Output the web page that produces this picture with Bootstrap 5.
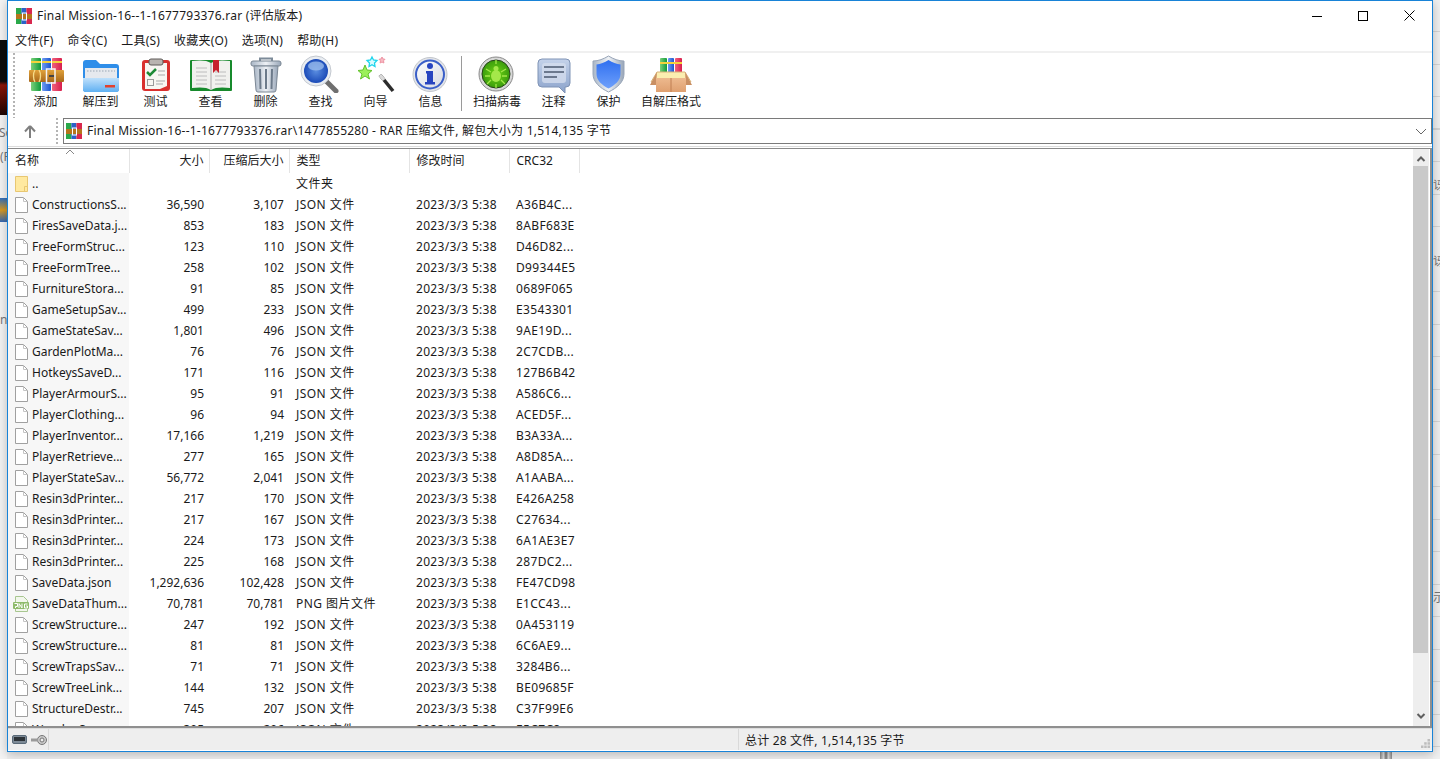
<!DOCTYPE html>
<html lang="zh-CN">
<head>
    <meta charset="UTF-8">
    <meta name="viewport" content="width=device-width, initial-scale=1.0">
    <title>Final Mission-16--1-1677793376.rar</title>
    <link rel="stylesheet" href="https://cdn.jsdelivr.net/npm/bootstrap@5.3.0/dist/css/bootstrap.min.css">
    <style>
        html, body { height: 100%; overflow: hidden; }
        body { background: #efefef; font: 12px/16px "Noto Sans", "Noto Sans CJK SC", sans-serif; color: #1a1a1a; }

        /* bits of other windows showing behind the archive window */
        .bg-left { left: 0; top: 0; width: 7px; height: 759px; background: #f4f4f4; overflow: hidden; }
        .bg-left .scrap-dark { height: 75px; margin-top: 40px; background: linear-gradient(#0b0b0b 55%, #8c1407 60%, #1c0502); }
        .bg-left .scrap-icon { height: 24px; margin-top: 83px; background: linear-gradient(#2f6fc0, #d89a22 50%, #3468b5); }
        .bg-right { left: 1433px; top: 0; width: 7px; height: 759px; overflow: hidden; background: repeating-linear-gradient(#f1f1f1 0 31px, #d6d6d6 31px 32.5px); }
        .scrap-text { color: #777; white-space: nowrap; }
        .scrap-bottom { left: 1380px; top: 752px; width: 12px; height: 7px; background: linear-gradient(90deg, #888, #ddd 30%, #777 50%, #ddd 70%, #888); }

        .rar-window { left: 7px; top: 0; width: 1426px; height: 752px; background: #fff; border: 1px solid #1883d7; box-shadow: 0 2px 10px rgba(0,0,0,.25); }
        .title-bar { height: 29px; }
        .title-bar .title-text { margin-left: 5px; letter-spacing: .24px; }
        .win-btn { width: 46px; height: 29px; }
        .menu-bar { height: 21px; }
        .menu-item { padding: 0 7px; letter-spacing: .2px; }
        .tool-bar { height: 67px; border-top: 2px solid #f0f0f0; padding-left: 5px; }
        .grip-v { width: 2px; background: repeating-linear-gradient(#b4b4b4 0 2px, transparent 2px 4px); }
        .tool-grip { margin-right: 3px; }
        .tool-btn { width: 55px; padding-top: 2px; }
        .tool-btn svg { display: block; }
        .tool-btn .lbl { display: block; line-height: 18px; white-space: nowrap; }
        .tool-sep { width: 1px; height: 55px; margin: 3px 6px 0 3px; background: #9a9a9a; }
        .addr-row { height: 27px; }
        .up-arrow { width: 48px; }
        .addr-box { height: 26px; border: 1px solid #7a7a7a; padding-left: 2px; margin-left: 5px; }
        .addr-box .addr-text { margin-left: 5px; letter-spacing: .25px; }
        .band-line { height: 2px; border-bottom: 1px solid #dcdcdc; }
        .list-box { height: 580px; border-top: 1px solid #8a8a8a; border-bottom: 2px solid #8f8f8f; border-right: 2px solid #8f8f8f; margin-top: 1px; }
        .file-scroll { overflow: hidden; }
        table.file-table { table-layout: fixed; width: 571px; border-collapse: collapse; }
        .file-table th { font-weight: 400; height: 24px; padding: 0 5px 0 7px; vertical-align: middle; border-right: 1px solid #e4e4e4; border-bottom: 0; }
        .file-table td { height: 21px; padding: 0 5px 0 7px; white-space: nowrap; overflow: hidden; }
        .file-table td.name-cell { background: #f7f7f7; padding: 0 0 0 7px; }
        .file-table td.type-cell { letter-spacing: .45px; }
        .file-table td.time-cell { letter-spacing: .3px; }
        .file-table td.crc-cell { letter-spacing: .35px; }
        .name-wrap { display: flex; align-items: center; gap: 4px; }
        .png-ico { margin: 0 -1px 0 -2px; }
        .sort-mark { left: 57px; top: 0; }
        .v-scroll { width: 16px; background: #eeeeee; margin-right: 1px; }
        .v-scroll .thumb { left: 0; right: 1px; top: 17px; height: 487px; background: #c9c9c9; }
        .status-bar { height: 22px; background: #eeeeee; border-top: 1px solid #dcdcdc; }
        .status-left { width: 41px; height: 100%; border-right: 1px solid #d9d9d9; }
        .status-text { margin-left: 689px; height: 100%; border-left: 1px solid #d9d9d9; padding: 2px 0 0 6px; letter-spacing: .17px; }
        .size-grip { right: 2px; bottom: 2px; }
    </style>
</head>
<body>
    <!-- other windows behind -->
    <div class="bg-left position-absolute">
        <div class="scrap-dark"></div><div class="scrap-icon"></div>
        <span class="scrap-text position-absolute" style="left:-1px;top:125px">So</span>
        <span class="scrap-text position-absolute" style="left:0;top:149px">(F</span>
        <span class="scrap-text position-absolute" style="left:0;top:312px">n</span>
    </div>
    <div class="bg-right position-absolute">
        <span class="scrap-text position-absolute" style="left:0;top:178px">讶</span>
        <span class="scrap-text position-absolute" style="left:0;top:254px">讶</span>
        <span class="scrap-text position-absolute" style="left:0;top:590px">示</span>
    </div>
    <div class="scrap-bottom position-absolute"></div>

    <div class="rar-window position-absolute d-flex flex-column">
        <!-- Title bar -->
        <div class="title-bar d-flex align-items-center">
            <svg class="ms-2" width="16" height="16" viewBox="0 0 16 16"><rect x="0" y="0" width="5.4" height="16" fill="#2aa84a"/><rect x="5.4" y="0" width="5" height="16" fill="#2a62c8"/><rect x="10.4" y="0" width="5.6" height="16" fill="#d8284e"/><rect x="0" y="6" width="16" height="5" fill="#b5751c"/><rect x="6.5" y="5" width="4" height="7" fill="none" stroke="#fff"/></svg>
            <span class="title-text">Final Mission-16--1-1677793376.rar (评估版本)</span>
            <div class="ms-auto d-flex">
                <div class="win-btn d-flex align-items-center justify-content-center"><svg width="10" height="10"><rect x="0" y="5" width="10" height="1" fill="#000"/></svg></div>
                <div class="win-btn d-flex align-items-center justify-content-center"><svg width="10" height="10"><rect x=".5" y=".5" width="9" height="9" fill="none" stroke="#000"/></svg></div>
                <div class="win-btn d-flex align-items-center justify-content-center"><svg width="11" height="11"><path d="M.5.5l10 10M10.500.5l-10 10" stroke="#000" fill="none"/></svg></div>
            </div>
        </div>

        <!-- Menu -->
        <div class="menu-bar d-flex align-items-center">
            <span class="menu-item">文件(F)</span><span class="menu-item">命令(C)</span><span class="menu-item">工具(S)</span><span class="menu-item">收藏夹(O)</span><span class="menu-item">选项(N)</span><span class="menu-item">帮助(H)</span>
        </div>

        <!-- Toolbar -->
        <div class="tool-bar d-flex">
            <div class="grip-v tool-grip h-100"></div>
            <div id="toolButtons" class="d-flex"></div>
        </div>

        <!-- Address row -->
        <div class="addr-row d-flex align-items-stretch">
            <div class="up-arrow d-flex align-items-center justify-content-center pe-1">
                <svg width="12" height="13" viewBox="0 0 12 13"><path d="M6 1L1 6.500M6 1l5 5.500M6 1v12" stroke="#7f7f7f" stroke-width="2" fill="none"/></svg>
            </div>
            <div class="grip-v"></div>
            <div class="addr-box flex-grow-1 d-flex align-items-center">
                <svg width="16" height="16" viewBox="0 0 16 16"><rect x="0" y="0" width="5.4" height="16" fill="#2aa84a"/><rect x="5.4" y="0" width="5" height="16" fill="#2a62c8"/><rect x="10.4" y="0" width="5.6" height="16" fill="#d8284e"/><rect x="0" y="6" width="16" height="5" fill="#b5751c"/><rect x="6.5" y="5" width="4" height="7" fill="none" stroke="#fff"/></svg>
                <span class="addr-text">Final Mission-16--1-1677793376.rar\1477855280 - RAR 压缩文件, 解包大小为 1,514,135 字节</span>
                <svg class="ms-auto me-1" width="12" height="7" viewBox="0 0 12 7"><path d="M1 1l5 5 5-5" stroke="#666" fill="none"/></svg>
            </div>
        </div>
        <div class="band-line"></div>

        <!-- File list -->
        <div class="list-box d-flex">
            <div class="file-scroll flex-grow-1 position-relative">
                <svg class="sort-mark position-absolute" width="10" height="6" viewBox="0 0 10 6"><path d="M1 5l4-4 4 4" stroke="#888" fill="none"/></svg>
                <table class="file-table">
                    <colgroup><col style="width:121px"><col style="width:80px"><col style="width:80px"><col style="width:120px"><col style="width:100px"><col style="width:70px"></colgroup>
                    <thead><tr>
                        <th>名称</th><th class="text-end">大小</th><th class="text-end">压缩后大小</th><th>类型</th><th>修改时间</th><th>CRC32</th>
                    </tr></thead>
                    <tbody id="fileRows"></tbody>
                </table>
            </div>
            <div class="v-scroll position-relative d-flex flex-column justify-content-between align-items-center">
                <svg class="mt-1" width="10" height="12" viewBox="0 0 10 12"><path d="M1.500 8L5 4.500 8.500 8" stroke="#5f5f5f" stroke-width="2" fill="none"/></svg>
                <div class="thumb position-absolute"></div>
                <svg class="mb-1" width="10" height="12" viewBox="0 0 10 12"><path d="M1.500 4L5 7.500 8.500 4" stroke="#5f5f5f" stroke-width="2" fill="none"/></svg>
            </div>
        </div>

        <!-- Status bar -->
        <div class="status-bar d-flex align-items-center position-relative">
            <div class="status-left d-flex align-items-center ps-1 gap-1">
                <svg width="15" height="9" viewBox="0 0 15 9"><rect x=".5" y=".5" width="14" height="8" rx="1.500" fill="#7d8a96" stroke="#5a6a78"/><rect x="2" y="2" width="11" height="4" fill="#2d3338"/></svg>
                <svg width="16" height="10" viewBox="0 0 16 10"><circle cx="11" cy="5" r="4.500" fill="#c9c9c9" stroke="#777"/><circle cx="11" cy="5" r="2" fill="#eee" stroke="#777"/><rect x="0" y="3.500" width="7" height="3" fill="#9a9a9a"/></svg>
            </div>
            <div class="status-text d-flex align-items-center">总计 28 文件, 1,514,135 字节</div>
            <svg class="size-grip position-absolute" width="9" height="9" viewBox="0 0 9 9" fill="#bdbdbd"><rect x="6.500" y="0" width="2.500" height="2.500"/><rect x="3.200" y="3.200" width="2.500" height="2.500"/><rect x="6.500" y="3.200" width="2.500" height="2.500"/><rect x="0" y="6.500" width="2.500" height="2.500"/><rect x="3.200" y="6.500" width="2.500" height="2.500"/><rect x="6.500" y="6.500" width="2.500" height="2.500"/></svg>
        </div>
    </div>

    <script src="https://cdn.jsdelivr.net/npm/bootstrap@5.3.0/dist/js/bootstrap.bundle.min.js"></script>
    <script>
        // Toolbar icons, drawn on a 44x38 box
        const books = (x, y, w, h) => `
            <rect x="${x}" y="${y}" width="${w}" height="${h}" rx="1" fill="url(#gGreen)"/>
            <rect x="${x + w + 1}" y="${y}" width="${w - 1}" height="${h}" rx="1" fill="url(#gBlue)"/>
            <rect x="${x + 2 * w + 1}" y="${y}" width="${w}" height="${h}" rx="1" fill="url(#gRed)"/>`;

        const icons = {
            add: books(7, 3, 10, 33) + `
                <rect x="7" y="6" width="10" height="2" fill="#f4d23c"/><rect x="18" y="6" width="9" height="2" fill="#f4d23c"/><rect x="28" y="6" width="10" height="2" fill="#f4d23c"/>
                <rect x="5" y="15" width="35" height="12" rx="1" fill="url(#gBelt)"/>
                <path d="M11 15c-2 3-2 9 0 12M15 15c2 3 2 9 0 12" fill="none" stroke="#f6dc8a" stroke-width="1.300"/>
                <rect x="22.500" y="14" width="8.500" height="14" fill="none" stroke="#f4f4f4" stroke-width="1.500"/>
                <rect x="25" y="20" width="5" height="2" fill="#444"/>`,
            extract: `
                <path d="M4 8a3 3 0 0 1 3-3h10l4 4h16a3 3 0 0 1 3 3v22a3 3 0 0 1-3 3H7a3 3 0 0 1-3-3z" fill="#2f8ee9"/>
                <rect x="6" y="13" width="32" height="10" fill="#e6e9ee"/>
                <path d="M8 16h28" stroke="#9aa7b5" stroke-dasharray="1.500 1.500"/>
                <path d="M4 23h36v11a3 3 0 0 1-3 3H7a3 3 0 0 1-3-3z" fill="url(#gFolder)"/>
                <rect x="26" y="30" width="10" height="2.500" fill="#e2412e"/>`,
            test: `
                <rect x="8" y="5" width="28" height="31" rx="3" fill="#d9302e"/>
                <path d="M11 8h22v23l-7 3H11z" fill="#f8f6f2"/>
                <rect x="15" y="4" width="14" height="6" rx="2" fill="#b9b4b0" stroke="#5f5a58"/>
                <path d="M13 17l3 3 6-6" stroke="#1f8a36" stroke-width="2.500" fill="none"/>
                <path d="M24 16h7M24 20h7M22 26h9M22 29h7" stroke="#a9a9a9"/>
                <rect x="13.500" y="24.500" width="6" height="6" fill="none" stroke="#9a9a9a"/>`,
            view: `
                <rect x="1" y="5" width="42" height="31" rx="1" fill="#178a2c"/>
                <path d="M3 6c7-1 15-1 19 2 4-3 12-3 19-2v27c-7-1-15-1-19 2-4-3-12-3-19-2z" fill="#f1f1ee"/>
                <path d="M22 8v27" stroke="#a8a8a8"/>
                <path d="M7 13h11M7 17h11M7 21h11M7 25h11M7 29h11M26 17h11M26 21h11M26 25h11M26 29h11" stroke="#bcbcbc"/>
                <path d="M24 5h6v13l-3-3-3 3z" fill="#c7232f"/>`,
            del: `
                <path d="M16 6V3.500h12V6" fill="none" stroke="#7d8b99" stroke-width="2"/>
                <rect x="7" y="6" width="30" height="5" rx="2" fill="url(#gSteel)" stroke="#7b8794"/>
                <path d="M10 11h24l-2 24a2 2 0 0 1-2 2H14a2 2 0 0 1-2-2z" fill="url(#gSteel)" stroke="#7b8794"/>
                <path d="M16 14l.5 20M22 14v20M28 14l-.5 20" stroke="#6c7a8a" stroke-width="2"/>`,
            find: `
                <path d="M27 26l10 10" stroke="#6f6f6f" stroke-width="5" stroke-linecap="round"/>
                <circle cx="17" cy="16" r="15" fill="#e9edf2" stroke="#c4c9d0"/>
                <circle cx="17" cy="16" r="12" fill="url(#gLens)"/>
                <ellipse cx="17" cy="11" rx="8" ry="4.500" fill="#9fc0ee" opacity=".75"/>`,
            wizard: `
                <path d="M26 20l13 16" stroke="#2c2c2c" stroke-width="3.500"/>
                <path d="M26 20l4 5" stroke="#d9d9d9" stroke-width="3.500"/>
                <path d="M11 10l2 5 5 .5-4 3.500 1.500 5-4.500-3-4.500 3L8 19l-4-3.500 5-.5z" fill="#9cf05a" stroke="#63c22d"/>
                <path d="M18 2l1.500 3 3.500.5-2.500 2.500.5 3.500-3-1.700-3 1.700.5-3.500L13 5.500l3.500-.5z" fill="#d8fbff" stroke="#1fd5ec" stroke-width="1.300"/>
                <path d="M28 2l1 2 2 .3-1.500 1.500.4 2.200-1.900-1-1.900 1 .4-2.200L25 4.300l2-.3z" fill="#f7b9c2" stroke="#ee93a3"/>`,
            info: `
                <circle cx="21" cy="19.500" r="17" fill="#e3e5e9" stroke="#c2c6cc"/>
                <circle cx="21" cy="19.500" r="14" fill="url(#gInfo)" stroke="#3a5fc8" stroke-width="2"/>
                <circle cx="21" cy="11" r="3" fill="#2744c0"/>
                <path d="M17 16h7v11h2v2.500H16V27h2v-8.500h-1z" fill="#2744c0"/>`,
            scan: `
                <circle cx="21" cy="19" r="17" fill="#d8d8d8" stroke="#8a8a8a"/>
                <circle cx="21" cy="19" r="14" fill="url(#gBug)" stroke="#28421c"/>
                <ellipse cx="21" cy="21" rx="5" ry="6" fill="#a4e84a"/>
                <circle cx="21" cy="13.500" r="2.500" fill="#a4e84a"/>
                <path d="M16 17l-5-3M26 17l5-3M15 21h-5M27 21h5M16 25l-4 4M26 25l4 4M21 5v4M21 29v4" stroke="#a4e84a" stroke-width="1.300"/>`,
            comment: `
                <path d="M10 4h24a4 4 0 0 1 4 4v20a4 4 0 0 1-4 4h-1v6l-6-6H10a4 4 0 0 1-4-4V8a4 4 0 0 1 4-4z" fill="url(#gBubble)" stroke="#7f93b5"/>
                <rect x="10" y="8" width="24" height="20" rx="3" fill="#d4dded" opacity=".8"/>
                <path d="M12 12h20M12 17h20M12 22h13" stroke="#4c5a70" stroke-width="1.500"/>`,
            protect: `
                <path d="M21.500 1c5 3 10 5 15.500 5v13c0 8-7 14-15.500 18C13 33 6 27 6 19V6c5.500 0 10.500-2 15.500-5z" fill="url(#gSteel)" stroke="#98a5b8"/>
                <path d="M21.500 5c4 2.500 8 4 12 4.500V19c0 6.500-5.500 11-12 14.500C15 30 9.500 25.500 9.500 19V9.500c4-.5 8-2 12-4.500z" fill="url(#gShield)"/>`,
            sfx: books(11, 3, 7, 18) + `
                <rect x="11" y="7" width="22" height="2" fill="#f4d23c"/>
                <path d="M8 17h28l6 10H2z" fill="#fbeeb0" stroke="#d9b27a"/>
                <path d="M8 17L1 30h6zM36 17l7 13h-6z" fill="#c98f63"/>
                <rect x="7" y="23" width="30" height="14" fill="url(#gBox)"/>
                <path d="M22 23v14" stroke="#c07f52"/>`
        };

        const toolButtons = [
            { icon: 'add', label: '添加' }, { icon: 'extract', label: '解压到' }, { icon: 'test', label: '测试' },
            { icon: 'view', label: '查看' }, { icon: 'del', label: '删除' }, { icon: 'find', label: '查找' },
            { icon: 'wizard', label: '向导' }, { icon: 'info', label: '信息' }, { sep: true },
            { icon: 'scan', label: '扫描病毒', width: 58 }, { icon: 'comment', label: '注释' },
            { icon: 'protect', label: '保护' }, { icon: 'sfx', label: '自解压格式', width: 70 }
        ];

        const gradientDefs = `<svg width="0" height="0" class="position-absolute"><defs>
            <linearGradient id="gGreen" x1="0" x2="1" y1="0" y2="0"><stop offset="0" stop-color="#7bd07a"/><stop offset="1" stop-color="#0f9a3a"/></linearGradient>
            <linearGradient id="gBlue" x1="0" x2="1" y1="0" y2="0"><stop offset="0" stop-color="#6f9df2"/><stop offset="1" stop-color="#1a55d0"/></linearGradient>
            <linearGradient id="gRed" x1="0" x2="1" y1="0" y2="0"><stop offset="0" stop-color="#f0627e"/><stop offset="1" stop-color="#d81e4c"/></linearGradient>
            <linearGradient id="gBelt" x1="0" x2="0" y1="0" y2="1"><stop offset="0" stop-color="#e0a13a"/><stop offset="1" stop-color="#a8681a"/></linearGradient>
            <linearGradient id="gFolder" x1="0" x2="0" y1="0" y2="1"><stop offset="0" stop-color="#bfe0fb"/><stop offset="1" stop-color="#5fb0f2"/></linearGradient>
            <linearGradient id="gSteel" x1="0" x2="1" y1="0" y2="0"><stop offset="0" stop-color="#a9b6c6"/><stop offset=".5" stop-color="#eef1f5"/><stop offset="1" stop-color="#98a6b8"/></linearGradient>
            <radialGradient id="gLens"><stop offset="0" stop-color="#5a8de0"/><stop offset="1" stop-color="#1b4bb8"/></radialGradient>
            <linearGradient id="gInfo" x1="0" x2="1" y1="0" y2="1"><stop offset="0" stop-color="#fff"/><stop offset="1" stop-color="#d4d8e2"/></linearGradient>
            <radialGradient id="gBug"><stop offset="0" stop-color="#6fd414"/><stop offset="1" stop-color="#3a9c0c"/></radialGradient>
            <linearGradient id="gBubble" x1="0" x2="0" y1="0" y2="1"><stop offset="0" stop-color="#c4d2ea"/><stop offset="1" stop-color="#8ba3cb"/></linearGradient>
            <linearGradient id="gShield" x1="0" x2="0" y1="0" y2="1"><stop offset="0" stop-color="#2f6ff0"/><stop offset="1" stop-color="#6ea0fb"/></linearGradient>
            <linearGradient id="gBox" x1="0" x2="0" y1="0" y2="1"><stop offset="0" stop-color="#edb98e"/><stop offset="1" stop-color="#dfa070"/></linearGradient>
        </defs></svg>`;

        const toolbar = document.getElementById('toolButtons');
        toolbar.innerHTML = gradientDefs + toolButtons.map(btn => {
            if (btn.sep) return '<div class="tool-sep"></div>';
            const width = btn.width ? `style="width:${btn.width}px"` : '';
            return `<div class="tool-btn d-flex flex-column align-items-center" ${width}>
                <svg width="44" height="38" viewBox="0 0 44 38">${icons[btn.icon]}</svg>
                <span class="lbl">${btn.label}</span></div>`;
        }).join('');

        // List rows: name, size, packed, crc. Icon and type default to a JSON file
        const files = [
            ['..', '', '', '', 'folder'],
            ['ConstructionsS...', '36,590', '3,107', 'A36B4C...'],
            ['FiresSaveData.j...', '853', '183', '8ABF683E'],
            ['FreeFormStruc...', '123', '110', 'D46D82...'],
            ['FreeFormTree...', '258', '102', 'D99344E5'],
            ['FurnitureStora...', '91', '85', '0689F065'],
            ['GameSetupSav...', '499', '233', 'E3543301'],
            ['GameStateSav...', '1,801', '496', '9AE19D...'],
            ['GardenPlotMa...', '76', '76', '2C7CDB...'],
            ['HotkeysSaveD...', '171', '116', '127B6B42'],
            ['PlayerArmourS...', '95', '91', 'A586C6...'],
            ['PlayerClothing...', '96', '94', 'ACED5F...'],
            ['PlayerInventor...', '17,166', '1,219', 'B3A33A...'],
            ['PlayerRetrieve...', '277', '165', 'A8D85A...'],
            ['PlayerStateSav...', '56,772', '2,041', 'A1AABA...'],
            ['Resin3dPrinter...', '217', '170', 'E426A258'],
            ['Resin3dPrinter...', '217', '167', 'C27634...'],
            ['Resin3dPrinter...', '224', '173', '6A1AE3E7'],
            ['Resin3dPrinter...', '225', '168', '287DC2...'],
            ['SaveData.json', '1,292,636', '102,428', 'FE47CD98'],
            ['SaveDataThum...', '70,781', '70,781', 'E1CC43...', 'png'],
            ['ScrewStructure...', '247', '192', '0A453119'],
            ['ScrewStructure...', '81', '81', '6C6AE9...'],
            ['ScrewTrapsSav...', '71', '71', '3284B6...'],
            ['ScrewTreeLink...', '144', '132', 'BE09685F'],
            ['StructureDestr...', '745', '207', 'C37F99E6'],
            ['WoodenS...', '305', '206', 'E5C7C8...']
        ];

        const rowIcons = {
            json: '<svg width="13" height="16" viewBox="0 0 13 16"><path d="M.5.500h8l4 4v11H.5z" fill="#fff" stroke="#a0a0a0"/><path d="M8.500.500v4h4" fill="none" stroke="#c4c4c4"/></svg>',
            folder: '<svg width="13" height="16" viewBox="0 0 13 16"><path d="M.5.500h12v15H.5z" fill="#ffe9a0" stroke="#e8c772"/><path d="M9.500 15V10.500H12.500" fill="none" stroke="#e8c772"/></svg>',
            png: '<svg class="png-ico" width="16" height="16" viewBox="0 0 16 16"><path d="M2.500.500h8l4 4v11h-12z" fill="#f2f7ec" stroke="#a8c690"/><rect x="0" y="6" width="16" height="7" rx="1" fill="#8fbb6c"/><path d="M1.500 7.500h3v3h-2v1.500M6 12V7.500l3 4.500V7.500M14.500 8h-3v4h3V10h-1.500" fill="none" stroke="#fff"/></svg>'
        };

        const tbody = document.getElementById('fileRows');
        files.forEach(([name, size, packed, crc, kind = 'json']) => {
            const type = { json: 'JSON 文件', folder: '文件夹', png: 'PNG 图片文件' }[kind];
            const time = kind === 'folder' ? '' : '2023/3/3 5:38';
            const row = document.createElement('tr');
            row.innerHTML = `<td class="name-cell"><div class="name-wrap">${rowIcons[kind]}<span>${name}</span></div></td>
                <td class="text-end">${size}</td><td class="text-end">${packed}</td>
                <td class="type-cell">${type}</td><td class="time-cell">${time}</td><td class="crc-cell">${crc}</td>`;
            tbody.appendChild(row);
        });
    </script>
</body>
</html>
